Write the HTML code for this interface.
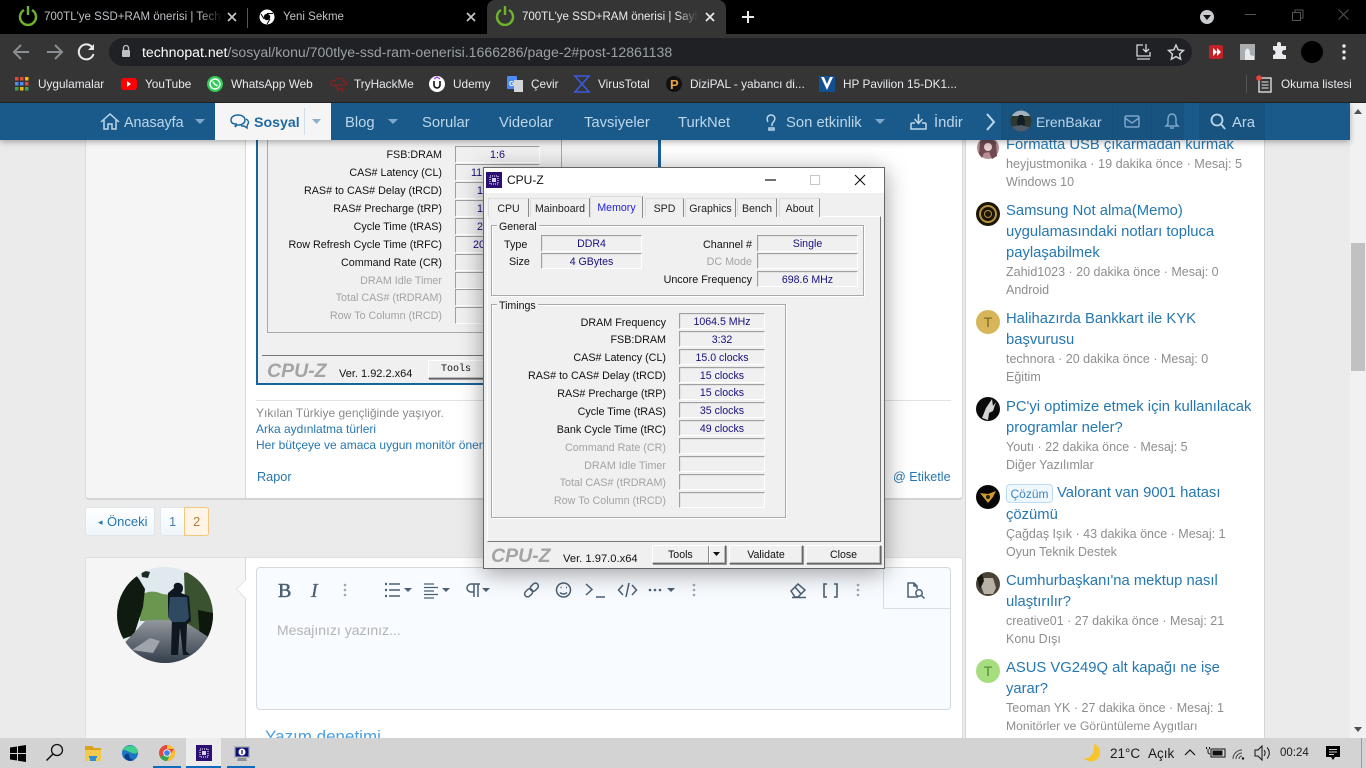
<!DOCTYPE html>
<html lang="tr"><head><meta charset="utf-8"><title>CPU-Z</title>
<style>
html,body{margin:0;padding:0;width:1366px;height:768px;overflow:hidden;background:#ebebeb;font-family:"Liberation Sans",sans-serif}
.l{position:absolute;left:0;top:0;width:1366px;height:768px;overflow:hidden}
.b{position:absolute;box-sizing:border-box}
.t{position:absolute;white-space:nowrap;line-height:20px;font-style:normal}
svg{position:absolute;left:0;top:0}
.n{font-size:14.8px;color:#bcd6ea;margin-top:1px}
.bm{font-size:11.8px;color:#e8eaed}
.h{font-size:14.8px;color:#2577b1;left:1006px;margin-top:1px}
.m{font-size:12.5px;color:#8e8e8e;left:1006px;margin-top:1px}
.cz{font-size:10.75px;color:#111;margin-top:1px}
.r{text-align:right}
.dis{color:#a3a3a3}
.f{position:absolute;box-sizing:border-box;background:#f0f0f0;border:1px solid;border-color:#a0a0a0 #fff #fff #a0a0a0;box-shadow:inset 1px 1px 0 #e3e3e3;font-size:10.6px;color:#17107e;text-align:center;line-height:16px;white-space:nowrap;overflow:hidden}
.tab{position:absolute;box-sizing:border-box;top:198px;height:19px;background:#f0f0f0;border:1px solid #dcdcdc;border-right:1px solid #8a8a8a;border-bottom:0;font-size:10.6px;color:#222;text-align:center;line-height:20px}
.btn{position:absolute;box-sizing:border-box;background:#f0f0f0;border:1px solid;border-color:#fff #666 #666 #fff;box-shadow:1px 1px 0 #999,inset -1px -1px 0 #bbb;font-size:10.6px;color:#111;text-align:center;line-height:18px}
.gb{position:absolute;box-sizing:border-box;border:1px solid #a9a9a9;box-shadow:inset 1px 1px 0 #fff,1px 1px 0 #fff}
.gl{position:absolute;background:#f0f0f0;font-size:10.6px;line-height:12px;padding:0 2px;color:#111;white-space:nowrap;margin-top:1px}
.logo{position:absolute;font:italic bold 19.5px/22px "Liberation Sans",sans-serif;color:#a4a4a4;white-space:nowrap}
</style></head><body>

<!-- PAGE -->
<div class="l" style="z-index:1">
 <div class="b" style="left:85px;top:100px;width:878px;height:400px;background:#fff;border:1px solid #dcdcdc;border-bottom:2px solid #d4d4d4;border-radius:0 0 4px 4px"></div>
 <div class="b" style="left:86px;top:100px;width:160px;height:398px;background:#f5f5f5;border-right:1px solid #d8d8d8;border-radius:0 0 0 4px"></div>

 <!-- Old CPU-Z image -->
 <div class="b" style="left:256px;top:100px;width:405px;height:285px;background:#f0f0f0;border:2px solid #17639b;border-width:0 3px 2px 2px"></div>
 <div class="b" style="left:267px;top:100px;width:295px;height:233px;border:1px solid #a9a9a9"></div>
 <div class="b" style="left:262px;top:355px;width:394px;height:1px;background:#777"></div>
 <div class="b" style="left:455px;top:146px;width:85px;height:17px;background:#f0f0f0;border:1px solid;border-color:#a0a0a0 #fff #fff #a0a0a0"></div>
 <div class="b" style="left:455px;top:164px;width:85px;height:17px;border:1px solid;border-color:#a0a0a0 #fff #fff #a0a0a0"></div>
 <div class="b" style="left:455px;top:182px;width:85px;height:17px;border:1px solid;border-color:#a0a0a0 #fff #fff #a0a0a0"></div>
 <div class="b" style="left:455px;top:200px;width:85px;height:17px;border:1px solid;border-color:#a0a0a0 #fff #fff #a0a0a0"></div>
 <div class="b" style="left:455px;top:218px;width:85px;height:17px;border:1px solid;border-color:#a0a0a0 #fff #fff #a0a0a0"></div>
 <div class="b" style="left:455px;top:236px;width:85px;height:17px;border:1px solid;border-color:#a0a0a0 #fff #fff #a0a0a0"></div>
 <div class="b" style="left:455px;top:254px;width:85px;height:17px;border:1px solid;border-color:#a0a0a0 #fff #fff #a0a0a0"></div>
 <div class="b" style="left:455px;top:272px;width:85px;height:17px;border:1px solid;border-color:#a0a0a0 #fff #fff #a0a0a0"></div>
 <div class="b" style="left:455px;top:289px;width:85px;height:17px;border:1px solid;border-color:#a0a0a0 #fff #fff #a0a0a0"></div>
 <div class="b" style="left:455px;top:307px;width:85px;height:17px;border:1px solid;border-color:#a0a0a0 #fff #fff #a0a0a0"></div>
 <i class="t cz r" style="left:262px;width:180px;top:144px">FSB:DRAM</i>
 <i class="t cz r" style="left:262px;width:180px;top:162px">CAS# Latency (CL)</i>
 <i class="t cz r" style="left:262px;width:180px;top:180px">RAS# to CAS# Delay (tRCD)</i>
 <i class="t cz r" style="left:262px;width:180px;top:198px">RAS# Precharge (tRP)</i>
 <i class="t cz r" style="left:262px;width:180px;top:216px">Cycle Time (tRAS)</i>
 <i class="t cz r" style="left:262px;width:180px;top:234px">Row Refresh Cycle Time (tRFC)</i>
 <i class="t cz r" style="left:262px;width:180px;top:252px">Command Rate (CR)</i>
 <i class="t cz r dis" style="left:262px;width:180px;top:270px">DRAM Idle Timer</i>
 <i class="t cz r dis" style="left:262px;width:180px;top:287px">Total CAS# (tRDRAM)</i>
 <i class="t cz r dis" style="left:262px;width:180px;top:305px">Row To Column (tRCD)</i>
 <i class="t cz" style="left:490px;top:144px;color:#17107e">1:6</i>
 <i class="t cz" style="left:471px;top:162px;color:#17107e">11</i>
 <i class="t cz" style="left:477px;top:180px;color:#17107e">1</i>
 <i class="t cz" style="left:477px;top:198px;color:#17107e">1</i>
 <i class="t cz" style="left:477px;top:216px;color:#17107e">2</i>
 <i class="t cz" style="left:473px;top:234px;color:#17107e">20</i>
 <div class="logo" style="left:267px;top:360px">CPU-Z</div>
 <i class="t cz" style="left:339px;top:363px;font-size:11px">Ver. 1.92.2.x64</i>
 <div class="btn" style="left:428px;top:360px;width:70px;height:19px;font-family:'Liberation Mono',monospace;font-size:10px;text-align:left;padding-left:12px">Tools</div>

 <div class="b" style="left:256px;top:400px;width:695px;height:1px;background:#e2e2e2"></div>
 <i class="t" style="left:256px;top:403px;font-size:12px;color:#8a8a8a">Yıkılan Türkiye gençliğinde yaşıyor.</i>
 <i class="t" style="left:256px;top:419px;font-size:12px;color:#2577b1">Arka aydınlatma türleri</i>
 <i class="t" style="left:256px;top:435px;font-size:12px;color:#2577b1">Her bütçeye ve amaca uygun monitör önerileri</i>
 <i class="t" style="left:257px;top:467px;font-size:12.7px;color:#2577b1">Rapor</i>
 <i class="t" style="left:893px;top:467px;font-size:12.6px;color:#2577b1">@ Etiketle</i>

 <!-- pagination -->
 <div class="b" style="left:85px;top:507px;width:70px;height:29px;background:linear-gradient(#fff,#eef6fc);border:1px solid #dfe5ea;border-radius:3px"></div>
 <i class="t" style="left:98px;top:512px;font-size:9px;color:#2577b1">◂</i>
 <i class="t" style="left:107px;top:512px;font-size:13px;color:#2577b1">Önceki</i>
 <div class="b" style="left:160px;top:507px;width:25px;height:29px;background:linear-gradient(#fff,#eef6fc);border:1px solid #dfe5ea;border-radius:3px 0 0 3px"></div>
 <i class="t" style="left:169px;top:512px;font-size:13px;color:#4a7fb5">1</i>
 <div class="b" style="left:184px;top:507px;width:25px;height:29px;background:#fff4e6;border:1px solid #f5c67e;border-radius:0 3px 3px 0"></div>
 <i class="t" style="left:193px;top:512px;font-size:13px;color:#b5803a">2</i>

 <!-- reply -->
 <div class="b" style="left:85px;top:557px;width:878px;height:200px;background:#fff;border:1px solid #dedede"></div>
 <div class="b" style="left:86px;top:558px;width:160px;height:200px;background:#f5f5f5;border-right:1px solid #d8d8d8"></div>
 <div class="b" style="left:237px;top:580px;width:18px;height:18px;background:#fff;transform:rotate(45deg) scale(.8);border-left:1px solid #dedede;border-bottom:1px solid #dedede"></div>
 <svg width="1366" height="768" style="z-index:1">
  <defs>
   <clipPath id="av"><circle cx="165" cy="615" r="48"/></clipPath>
   <linearGradient id="gr" x1="0" y1="0" x2="0" y2="1"><stop offset="0" stop-color="#92979c"/><stop offset="1" stop-color="#343e4c"/></linearGradient>
  </defs>
  <g clip-path="url(#av)">
   <rect x="117" y="567" width="96" height="96" fill="#dfe9ee"/>
   <path d="M140 596c8-6 16-5 22-2l20 2v25h-42z" fill="#6b9650"/>
   <path d="M117 567h12l10 12 6 10-2 18-9 28-17 6z" fill="#0f1a10"/>
   <path d="M141 570l9 2-2 6-6-1z" fill="#1c2a20"/>
   <path d="M184 573l8-2 21 8v58l-14 3-13-10z" fill="#3a5230"/>
   <path d="M198 610l15 3v25l-13 2z" fill="#0d170b"/>
   <path d="M146 620h36l31 20v23h-96v-12z" fill="url(#gr)"/>
   <path d="M132 650l18-12 10 3-7 12z" fill="#9ea4aa"/>
   <path d="M174 588c-2-7 9-7 9 0 0 3-1 4-2 5l8 3 2 25-4 3-1 27 4 4-7 0-3-27-2 27-7 0 1-36-4-3 0-23z" fill="#0f1720"/>
   <path d="M170 597h17l2 21-4 4h-13l-4-5z" fill="#2f4a60"/>
  </g>
 </svg>
 <div class="b" style="left:256px;top:567px;width:695px;height:143px;background:#f8fbff;border:1px solid #d5d8dc;border-radius:4px"></div>
 <div class="b" style="left:883px;top:567px;width:68px;height:42px;border:1px solid #dadde0;border-width:0 0 1px 1px"></div>
 <i class="t" style="left:277px;top:620px;font-size:14px;color:#b3b3b3">Mesajınızı yazınız...</i>
 <i class="t" style="left:265px;top:727px;font-size:17px;color:#4a9fe0">Yazım denetimi</i>

 <svg width="1366" height="768" fill="none" stroke="#4a5f73" stroke-width="1.500" style="z-index:2">
  <text x="278" y="597" font-family="Liberation Serif" font-size="20" fill="#4a5f73" stroke="#4a5f73" stroke-width=".5">B</text>
  <text x="311" y="597" font-family="Liberation Serif" font-size="20" font-style="italic" fill="#4a5f73" stroke="#4a5f73" stroke-width=".3">I</text>
  <g fill="#9aa8b4" stroke="none"><circle cx="345" cy="585" r="1.300"/><circle cx="345" cy="590" r="1.300"/><circle cx="345" cy="595" r="1.300"/><circle cx="694" cy="585" r="1.300"/><circle cx="694" cy="590" r="1.300"/><circle cx="694" cy="595" r="1.300"/><circle cx="858" cy="585" r="1.300"/><circle cx="858" cy="590" r="1.300"/><circle cx="858" cy="595" r="1.300"/></g>
  <path d="M389 584h11M389 590h11M389 596h11"/>
  <path d="M385 584h2M385 590h2M385 596h2" stroke-width="2.200"/>
  <path d="M424 584h10M424 587.500h14M424 591h10M424 594.500h14M424 598h10" stroke-width="1.200"/>
  <path d="M474 597v-13M478 597v-13M480 584h-9a4 4 0 0 0 0 8h3"/>
  <g fill="#4a5f73" stroke="none"><path d="M404 588h8l-4 4zM442 588h8l-4 4zM482 588h8l-4 4zM667 588h8l-4 4z"/><circle cx="650" cy="590" r="1.300"/><circle cx="655" cy="590" r="1.300"/><circle cx="660" cy="590" r="1.300"/></g>
  <g transform="rotate(-45 531.500 590)"><rect x="523" y="587" width="9" height="6" rx="3"/><rect x="531" y="587" width="9" height="6" rx="3"/></g>
  <circle cx="563.500" cy="590" r="7"/><path d="M560 592.500c2 2 5 2 7 0M560.500 587.500h1M566 587.500h1"/>
  <path d="M586 584l6 5.500-6 5.500M596 597h9"/>
  <path d="M623 585l-4.500 5 4.500 5M632 585l4.500 5-4.500 5M629 583l-3 14"/>
  <path d="M791 591l7-7 7 6-7 7h-3zM795 587l6 7M792 597.500h14"/>
  <path d="M827 584h-3v13h3M834 584h3v13h-3" stroke-width="1.600"/>
  <path d="M918 597h-10v-14h6l3 3v3M914 583v3h3M908 597h5"/><circle cx="919" cy="593" r="3.200"/><path d="M921.500 595.500l3 3"/>
 </svg>

 <!-- sidebar -->
 <div class="b" style="left:965px;top:100px;width:300px;height:640px;background:#fff;border:1px solid #d5d5d5;border-width:0 1px"></div>
 <i class="t h" style="top:134px">Formatta USB çıkarmadan kurmak</i>
 <i class="t m" style="top:153px;font-size:12.65px">heyjustmonika · 19 dakika önce · Mesaj: 5</i>
 <i class="t m" style="top:171px">Windows 10</i>
 <i class="t h" style="top:200px">Samsung Not alma(Memo)</i>
 <i class="t h" style="top:221px">uygulamasındaki notları topluca</i>
 <i class="t h" style="top:242px">paylaşabilmek</i>
 <i class="t m" style="top:261px">Zahid1023 · 20 dakika önce · Mesaj: 0</i>
 <i class="t m" style="top:279px">Android</i>
 <i class="t h" style="top:308px">Halihazırda Bankkart ile KYK</i>
 <i class="t h" style="top:329px">başvurusu</i>
 <i class="t m" style="top:348px">technora · 20 dakika önce · Mesaj: 0</i>
 <i class="t m" style="top:366px">Eğitim</i>
 <i class="t h" style="top:396px">PC'yi optimize etmek için kullanılacak</i>
 <i class="t h" style="top:417px">programlar neler?</i>
 <i class="t m" style="top:436px">Youtı · 22 dakika önce · Mesaj: 5</i>
 <i class="t m" style="top:454px">Diğer Yazılımlar</i>
 <div class="b" style="left:1006px;top:484px;width:47px;height:19px;background:#f0f8ff;border:1px solid #bcdcf5;border-radius:4px;font-size:12px;color:#3f86bd;text-align:center;line-height:18px">Çözüm</div>
 <i class="t h" style="left:1057px;top:482px">Valorant van 9001 hatası</i>
 <i class="t h" style="top:504px">çözümü</i>
 <i class="t m" style="top:523px">Çağdaş Işık · 43 dakika önce · Mesaj: 1</i>
 <i class="t m" style="top:541px">Oyun Teknik Destek</i>
 <i class="t h" style="top:570px">Cumhurbaşkanı'na mektup nasıl</i>
 <i class="t h" style="top:591px">ulaştırılır?</i>
 <i class="t m" style="top:610px">creative01 · 27 dakika önce · Mesaj: 21</i>
 <i class="t m" style="top:628px">Konu Dışı</i>
 <i class="t h" style="top:657px">ASUS VG249Q alt kapağı ne işe</i>
 <i class="t h" style="top:678px">yarar?</i>
 <i class="t m" style="top:697px">Teoman YK · 27 dakika önce · Mesaj: 1</i>
 <i class="t m" style="top:715px;font-size:12.2px">Monitörler ve Görüntüleme Aygıtları</i>
 <svg width="1366" height="768" style="z-index:2">
  <circle cx="988" cy="148" r="11" fill="#b58f94"/><path d="M980 141l8-4 8 5 1 14-5 3-3-7-5 1-2 5-3-4z" fill="#6e4a52"/><circle cx="988" cy="147" r="4" fill="#e8cfcb"/>
  <circle cx="988" cy="214" r="12" fill="#1c1608"/><circle cx="988" cy="214" r="8" fill="none" stroke="#b5923f" stroke-width="2"/><circle cx="988" cy="214" r="3.500" fill="none" stroke="#b5923f"/>
  <circle cx="988" cy="322" r="12" fill="#d6b658"/><text x="988" y="327" text-anchor="middle" font-family="Liberation Sans" font-size="14" fill="#7c6425">T</text>
  <circle cx="988" cy="409" r="12" fill="#0b0b0b"/><path d="M982 418l4-10 6-9 1 7 3-4-3 9-4 2-1 7z" fill="#d5d5d5"/>
  <circle cx="988" cy="497" r="12" fill="#070707"/><path d="M980 493l8 1 8-3-3 6-5 6-4-5z" fill="#d19a2a"/><circle cx="988" cy="497" r="2" fill="#222"/>
  <circle cx="988" cy="584" r="12" fill="#4b4238"/><path d="M984 578h9l3 10-3 6h-9l-3-8z" fill="#b8b1a6"/><path d="M977 578l5-4 2 7-4 8z" fill="#1d1712"/>
  <circle cx="988" cy="671" r="12" fill="#a6dd7f"/><text x="988" y="676" text-anchor="middle" font-family="Liberation Sans" font-size="14" fill="#4f8a2e">T</text>
 </svg>

 <!-- scrollbar -->
 <div class="b" style="left:1350px;top:103px;width:16px;height:635px;background:#f1f1f1"></div>
 <div class="b" style="left:1351px;top:243px;width:14px;height:128px;background:#c1c1c1"></div>
 <div class="b" style="left:1354px;top:109px;border:4px solid transparent;border-top:0;border-bottom:5px solid #505050"></div>
 <div class="b" style="left:1354px;top:727px;border:4px solid transparent;border-bottom:0;border-top:5px solid #505050"></div>
</div>

<!-- NAV -->
<div class="l" style="z-index:3;height:150px">
 <div class="b" style="left:0;top:103px;width:1350px;height:37px;background:#1a5a8a;box-shadow:0 2px 6px rgba(0,0,0,.3)"></div>
 <div class="b" style="left:215px;top:103px;width:116px;height:37px;background:#f5f5f5"></div>
 <div class="b" style="left:304px;top:108px;width:1px;height:27px;background:#cfdde8"></div>
 <div class="b" style="left:1001px;top:103px;width:183px;height:37px;background:#185380"></div>
 <div class="b" style="left:1112px;top:103px;width:1px;height:37px;background:#164c75"></div>
 <div class="b" style="left:1151px;top:103px;width:1px;height:37px;background:#164c75"></div>
 <div class="b" style="left:1199px;top:103px;width:66px;height:37px;background:#185380"></div>
 <i class="t n" style="left:124px;top:112px;font-size:14.3px">Anasayfa</i>
 <i class="t" style="left:254px;top:113px;font-size:14.2px;font-weight:bold;color:#1d6aa3">Sosyal</i>
 <i class="t n" style="left:345px;top:112px">Blog</i>
 <i class="t n" style="left:422px;top:112px">Sorular</i>
 <i class="t n" style="left:499px;top:112px">Videolar</i>
 <i class="t n" style="left:584px;top:112px">Tavsiyeler</i>
 <i class="t n" style="left:678px;top:112px">TurkNet</i>
 <i class="t n" style="left:786px;top:112px">Son etkinlik</i>
 <i class="t n" style="left:934px;top:112px">İndir</i>
 <i class="t n" style="left:1036px;top:111px;font-size:13.9px">ErenBakar</i>
 <i class="t n" style="left:1232px;top:112px">Ara</i>
 <svg width="1366" height="150" fill="none" stroke="#bcd6ea" stroke-width="1.500">
  <path d="M101 122l9-8 9 8M104 120v9h4v-5h4v5h4v-9"/>
  <g stroke="#1d6aa3"><path d="M236 124c-4 0-5-2-5-4 0-3 3-5 7-5s7 2 7 5-3 5-6 5h-2l-2 2z"/><path d="M246 119c2 1 3 3 2 5-1 1-1 2-1 4l-3-2h-3"/></g>
  <path d="M768 122c-2-4 0-7 3-7s5 3 3 6l-2 3v2M769 128h5v2h-5z"/>
  <path d="M911 123v6h15v-6M918.500 114v9M914.500 119l4 4.500 4-4.500M911 123h4M922 123h4"/>
  <path d="M987 114l7 8-7 8" stroke-width="2"/>
  <g stroke="#7ba6c9"><rect x="1125" y="116" width="14" height="11" rx="1.500"/><path d="M1125 118l7 5 7-5"/>
  <path d="M1172 114c-3 0-4 3-4 5v5l-2 2h12l-2-2v-5c0-2-1-5-4-5zM1170 128h4"/></g>
  <circle cx="1217" cy="120" r="5.500" stroke-width="1.800"/><path d="M1221 124l4 5" stroke-width="1.800"/>
  <g fill="#7ea9cc" stroke="none"><path d="M195 119h10l-5 5zM388 119h10l-5 5zM875 119h10l-5 5z"/></g>
  <path d="M312 119h9l-4.500 5z" fill="#8ab0cc" stroke="none"/>
  <defs><clipPath id="uav"><circle cx="1021" cy="121" r="10.500"/></clipPath></defs>
  <g clip-path="url(#uav)" stroke="none"><rect x="1010" y="110" width="22" height="22" fill="#2f392f"/><path d="M1010 110h22v6h-22z" fill="#9fb2bd"/><path d="M1019 115h4l2 6-1 11h-6l-1-11z" fill="#121c25"/><path d="M1010 127l11-2 11 3v4h-22z" fill="#525d68"/></g>
 </svg>
</div>

<!-- CPU-Z WINDOW -->
<div class="l" style="z-index:4">
 <div class="b" style="left:483px;top:167px;width:402px;height:402px;background:#f0f0f0;border:1px solid #666;box-shadow:0 4px 22px rgba(0,0,0,.38)"></div>
 <div class="b" style="left:484px;top:168px;width:400px;height:25px;background:#fff"></div>
 <i class="t" style="left:507px;top:170px;font-size:12px;color:#111">CPU-Z</i>
 <svg width="1366" height="768" style="z-index:2">
  <rect x="486" y="172" width="16" height="16" fill="#2b0f73"/>
  <rect x="490" y="176" width="8" height="8" fill="none" stroke="#fff" stroke-dasharray="1 1"/><rect x="492" y="178" width="4" height="4" fill="#d8d2ec"/>
  <path d="M765 180h11" stroke="#111" stroke-width="1.200"/>
  <rect x="810.500" y="175.500" width="9" height="9" fill="none" stroke="#c8c8c8"/>
  <path d="M855 175l10 10M865 175l-10 10" stroke="#111" stroke-width="1.100"/>
  <path d="M713 552h7l-3.500 4z" fill="#111"/>
 </svg>

 <div class="b" style="left:487px;top:216px;width:394px;height:326px;border:1px solid;border-color:#fff #777 #777 #fff;background:#f0f0f0"></div>
 <div class="tab" style="left:488px;width:41px">CPU</div>
 <div class="tab" style="left:530px;width:60px">Mainboard</div>
 <div class="tab" style="left:645px;width:39px">SPD</div>
 <div class="tab" style="left:685px;width:51px">Graphics</div>
 <div class="tab" style="left:737px;width:40px">Bench</div>
 <div class="tab" style="left:779px;width:41px">About</div>
 <div class="tab" style="left:590px;top:196px;width:53px;height:22px;color:#2222dd;border-bottom:0;line-height:23px;z-index:2">Memory</div>

 <div class="gb" style="left:491px;top:225px;width:373px;height:71px"></div>
 <div class="gl" style="left:497px;top:220px">General</div>
 <i class="t cz" style="left:504px;top:234px">Type</i>
 <i class="t cz" style="left:509px;top:251px">Size</i>
 <div class="f" style="left:541px;top:235px;width:101px;height:17px">DDR4</div>
 <div class="f" style="left:541px;top:253px;width:101px;height:16px">4 GBytes</div>
 <i class="t cz r" style="left:640px;width:112px;top:234px">Channel #</i>
 <i class="t cz r dis" style="left:640px;width:112px;top:251px">DC Mode</i>
 <i class="t cz r" style="left:640px;width:112px;top:269px">Uncore Frequency</i>
 <div class="f" style="left:757px;top:235px;width:101px;height:17px">Single</div>
 <div class="f" style="left:757px;top:253px;width:101px;height:16px"></div>
 <div class="f" style="left:757px;top:271px;width:101px;height:16px">698.6 MHz</div>

 <div class="gb" style="left:491px;top:304px;width:295px;height:214px"></div>
 <div class="gl" style="left:497px;top:299px">Timings</div>
 <i class="t cz r" style="left:490px;width:176px;top:312px">DRAM Frequency</i>
 <i class="t cz r" style="left:490px;width:176px;top:329px">FSB:DRAM</i>
 <i class="t cz r" style="left:490px;width:176px;top:347px">CAS# Latency (CL)</i>
 <i class="t cz r" style="left:490px;width:176px;top:365px">RAS# to CAS# Delay (tRCD)</i>
 <i class="t cz r" style="left:490px;width:176px;top:383px">RAS# Precharge (tRP)</i>
 <i class="t cz r" style="left:490px;width:176px;top:401px">Cycle Time (tRAS)</i>
 <i class="t cz r" style="left:490px;width:176px;top:419px">Bank Cycle Time (tRC)</i>
 <i class="t cz r dis" style="left:490px;width:176px;top:437px">Command Rate (CR)</i>
 <i class="t cz r dis" style="left:490px;width:176px;top:455px">DRAM Idle Timer</i>
 <i class="t cz r dis" style="left:490px;width:176px;top:472px">Total CAS# (tRDRAM)</i>
 <i class="t cz r dis" style="left:490px;width:176px;top:490px">Row To Column (tRCD)</i>
 <div class="f" style="left:679px;top:313px;width:86px;height:16px">1064.5 MHz</div>
 <div class="f" style="left:679px;top:331px;width:86px;height:16px">3:32</div>
 <div class="f" style="left:679px;top:349px;width:86px;height:16px">15.0 clocks</div>
 <div class="f" style="left:679px;top:367px;width:86px;height:16px">15 clocks</div>
 <div class="f" style="left:679px;top:384px;width:86px;height:16px">15 clocks</div>
 <div class="f" style="left:679px;top:402px;width:86px;height:16px">35 clocks</div>
 <div class="f" style="left:679px;top:420px;width:86px;height:16px">49 clocks</div>
 <div class="f" style="left:679px;top:438px;width:86px;height:16px"></div>
 <div class="f" style="left:679px;top:456px;width:86px;height:16px"></div>
 <div class="f" style="left:679px;top:474px;width:86px;height:16px"></div>
 <div class="f" style="left:679px;top:492px;width:86px;height:16px"></div>

 <div class="logo" style="left:491px;top:545px">CPU-Z</div>
 <i class="t cz" style="left:563px;top:548px;font-size:11.2px">Ver. 1.97.0.x64</i>
 <div class="btn" style="left:652px;top:545px;width:74px;height:19px;text-align:left;padding-left:15px">Tools</div>
 <div class="b" style="left:708px;top:546px;width:2px;height:17px;background:#888;border-right:1px solid #fff"></div>
 <div class="btn" style="left:729px;top:545px;width:74px;height:19px">Validate</div>
 <div class="btn" style="left:806px;top:545px;width:75px;height:19px">Close</div>
</div>

<!-- BROWSER CHROME + TASKBAR -->
<div class="l" style="z-index:5">
 <div class="b" style="left:0;top:0;width:1366px;height:34px;background:#000"></div>
 <div class="b" style="left:487px;top:0;width:239px;height:34px;background:#353535;border-radius:8px 8px 0 0"></div>
 <div class="b" style="left:0;top:34px;width:1366px;height:68px;background:#353535"></div>
 <div class="b" style="left:0;top:102px;width:1366px;height:1px;background:#222"></div>
 <div class="b" style="left:109px;top:38px;width:1083px;height:28px;background:#202124;border-radius:14px"></div>
 <div class="b" style="left:247px;top:8px;width:1px;height:20px;background:#555"></div>

 <div class="b" style="left:44px;top:7px;width:178px;height:20px;overflow:hidden;-webkit-mask-image:linear-gradient(90deg,#000 88%,transparent)"><i class="t" style="left:0;top:0;font-size:11.5px;color:#bdc1c6">700TL'ye SSD+RAM önerisi | Technopat Sosyal</i></div>
 <i class="t" style="left:283px;top:7px;font-size:11.5px;color:#bdc1c6">Yeni Sekme</i>
 <div class="b" style="left:522px;top:7px;width:176px;height:20px;overflow:hidden;-webkit-mask-image:linear-gradient(90deg,#000 88%,transparent)"><i class="t" style="left:0;top:0;font-size:11.5px;color:#e8eaed">700TL'ye SSD+RAM önerisi | Sayfa 2</i></div>

 <i class="t" style="left:142px;top:42px;font-size:14.1px;color:#fff">technopat.net<span style="color:#9aa0a6">/sosyal/konu/700tlye-ssd-ram-oenerisi.1666286/page-2#post-12861138</span></i>

 <i class="t bm" style="left:38px;top:74px">Uygulamalar</i>
 <i class="t bm" style="left:145px;top:74px">YouTube</i>
 <i class="t bm" style="left:231px;top:74px">WhatsApp Web</i>
 <i class="t bm" style="left:354px;top:74px">TryHackMe</i>
 <i class="t bm" style="left:453px;top:74px">Udemy</i>
 <i class="t bm" style="left:531px;top:74px">Çevir</i>
 <i class="t bm" style="left:598px;top:74px">VirusTotal</i>
 <i class="t bm" style="left:690px;top:74px">DiziPAL - yabancı di...</i>
 <i class="t bm" style="left:843px;top:74px">HP Pavilion 15-DK1...</i>
 <i class="t bm" style="left:1281px;top:74px">Okuma listesi</i>

 <!-- taskbar -->
 <div class="b" style="left:0;top:738px;width:1366px;height:30px;background:#d3d3d3"></div>
 <div class="b" style="left:186px;top:738px;width:35px;height:30px;background:#ececec"></div>
 <div class="b" style="left:153px;top:766px;width:28px;height:2px;background:#0f6cbd"></div>
 <div class="b" style="left:186px;top:766px;width:35px;height:2px;background:#0f6cbd"></div>
 <div class="b" style="left:227px;top:766px;width:28px;height:2px;background:#0f6cbd"></div>
 <div class="b" style="left:1361px;top:738px;width:1px;height:30px;background:#9b9b9b"></div>
 <i class="t" style="left:1110px;top:744px;font-size:13.5px;color:#1a1a1a">21°C</i>
 <i class="t" style="left:1148px;top:744px;font-size:13.5px;color:#1a1a1a">Açık</i>
 <i class="t" style="left:1280px;top:743px;font-size:11.5px;color:#1a1a1a">00:24</i>

 <svg width="1366" height="768" fill="none">
  <!-- tab icons -->
  <g stroke="#6fb52c" stroke-width="2.400"><path d="M24 10a8 8 0 1 0 8 0"/><path d="M28 6v9"/><path d="M501 10a8 8 0 1 0 8 0"/><path d="M505 6v9"/></g>
  <circle cx="267" cy="17" r="7.500" fill="#fff"/><circle cx="267" cy="17" r="3.200" fill="#000"/><path d="M267 13.500h6M264 19l-3-5M270 19l-3 5" stroke="#000"/>
  <g stroke="#c4c7cb" stroke-width="1.700"><path d="M228 13l8 8M236 13l-8 8M467 13l8 8M475 13l-8 8"/></g>
  <path d="M706 13l8 8M714 13l-8 8" stroke="#e8eaed" stroke-width="1.700"/>
  <path d="M742 17h12M748 11v12" stroke="#e8eaed" stroke-width="2"/>
  <circle cx="1207" cy="17" r="7" fill="#c9cbce"/><path d="M1203 15h8l-4 5z" fill="#111"/>
  <path d="M1245 14.500h11" stroke="#555"/>
  <path d="M1292.500 12.500h8v8h-8zM1295 12.500v-2.500h8v8h-2.500" stroke="#555"/>
  <path d="M1338.500 9.500l10 10M1348.500 9.500l-10 10" stroke="#555"/>
  <!-- toolbar -->
  <path d="M29 52H15M21 45l-7 7 7 7" stroke="#8a8d91" stroke-width="2"/>
  <path d="M47 52h14M55 45l7 7-7 7" stroke="#8a8d91" stroke-width="2"/>
  <path d="M92 47a7.500 7.500 0 1 0 1.500 7" stroke="#e8eaed" stroke-width="2"/><path d="M94 44v6h-6z" fill="#e8eaed"/>
  <rect x="122" y="50" width="8" height="7" rx="1" fill="#bdc1c6"/><path d="M123.500 50v-2a2.500 2.500 0 0 1 5 0v2" stroke="#bdc1c6" stroke-width="1.300"/>
  <path d="M1143 45h-6v11h13v-4M1137 59h13M1146 44v8M1143 49l3 3 3-3" stroke="#d5d7da" stroke-width="1.300"/>
  <path d="M1176 45l2.200 4.800 5.300.6-3.900 3.600 1 5.200-4.600-2.600-4.600 2.600 1-5.200-3.900-3.600 5.300-.6z" stroke="#d5d7da" stroke-width="1.400"/>
  <rect x="1209" y="45" width="14" height="14" rx="2" fill="#c22226"/><path d="M1213 48l4 4-4 4zM1217 48l4 4-4 4z" fill="#fff"/>
  <rect x="1240" y="44" width="15" height="16" fill="#a9adb0"/><path d="M1245 60v-7c0-6 5-6 5 0v2l4 1v4z" fill="#e8eaed"/>
  <path d="M1273 48h4v-2a2 2 0 0 1 4 0v2h5v4h-1.500a2.500 2.500 0 0 0 0 5H1286v4h-13v-4a2.500 2.500 0 0 0 0-5z" fill="#e8eaed" transform="translate(0,-2)"/>
  <circle cx="1312" cy="52" r="11" fill="#000"/>
  <g fill="#e8eaed"><circle cx="1344" cy="46" r="1.700"/><circle cx="1344" cy="52" r="1.700"/><circle cx="1344" cy="58" r="1.700"/></g>
  <!-- bookmarks -->
  <g><rect x="15" y="77" width="3.500" height="3.500" fill="#e04a3f"/><rect x="20" y="77" width="3.500" height="3.500" fill="#e04a3f"/><rect x="25" y="77" width="3.500" height="3.500" fill="#f2b50f"/><rect x="15" y="82" width="3.500" height="3.500" fill="#4c8bf5"/><rect x="20" y="82" width="3.500" height="3.500" fill="#4c8bf5"/><rect x="25" y="82" width="3.500" height="3.500" fill="#e04a3f"/><rect x="15" y="87" width="3.500" height="3.500" fill="#34a853"/><rect x="20" y="87" width="3.500" height="3.500" fill="#f2b50f"/><rect x="25" y="87" width="3.500" height="3.500" fill="#34a853"/></g>
  <rect x="121" y="78" width="16" height="12" rx="3" fill="#f00"/><path d="M127 81l4 3-4 3z" fill="#fff"/>
  <circle cx="215" cy="84" r="8" fill="#2fcb56"/><circle cx="215" cy="84" r="5" fill="none" stroke="#fff" stroke-width="1.400"/><path d="M213 81.500l1 2 2.500 2 1-.5" stroke="#fff" stroke-width="1.500"/>
  <path d="M331 84c0-3 3-4 4-3 1-4 7-4 8 0 3 0 4 2 3 4h-15zM335 85l3 5 4-2 1 4" stroke="#9b1c1c" stroke-width="1.100"/>
  <circle cx="437" cy="84" r="8" fill="#fff"/><path d="M434 81v4a3 3 0 0 0 6 0v-4" stroke="#111" stroke-width="1.600"/><path d="M434 79l3-2 3 2" stroke="#a435f0" stroke-width="1.200"/>
  <rect x="507" y="76" width="10" height="13" rx="1" fill="#4c8bf5"/><rect x="514" y="80" width="9" height="12" fill="#d3d5d8"/><text x="509" y="86" font-family="Liberation Sans" font-size="7" font-weight="bold" fill="#fff">G</text>
  <path d="M575 76h14l-7 8 7 8h-14l7-8z" stroke="#3b5be0" stroke-width="1.500"/>
  <circle cx="674" cy="84" r="8" fill="#111"/><text x="670" y="89" font-family="Liberation Sans" font-size="13" font-weight="bold" fill="#e8a33d">P</text>
  <rect x="819" y="76" width="16" height="16" fill="#12508f"/><path d="M821 77l6 13 6-13h-3l-3 7-3-7z" fill="#fff"/>
  <path d="M1246.500 75v18" stroke="#555"/>
  <rect x="1259" y="78" width="12" height="14" stroke="#e8eaed" stroke-width="1.300"/><path d="M1261.500 82h7M1261.500 85h7M1261.500 88h7" stroke="#e8eaed"/><circle cx="1259" cy="78" r="2.800" fill="#ea4335"/>
  <!-- taskbar icons -->
  <path d="M10 747.500l7-1v6.500h-7zM18 746.300l8-1.300v8h-8zM10 754h7v6.500l-7-1zM18 754h8v8l-8-1.300z" fill="#000"/>
  <circle cx="57" cy="750" r="5.500" stroke="#111" stroke-width="1.300"/><path d="M53 754l-6.500 6.500" stroke="#111" stroke-width="1.500"/>
  <path d="M85 746h7l2 2h7v3H85z" fill="#d9a21b"/><path d="M85 750h16v11H85z" fill="#f4c94f"/><path d="M90 761v-5h6v5z" fill="#2d8fd5"/><path d="M89 756h8v2h-8z" fill="#2d8fd5"/>
  <circle cx="130" cy="753" r="8" fill="#1a76c4"/><path d="M123 750c2-6 13-6 15 1 0 3-4 3-6 2-3-1-6-3-9-3z" fill="#3fcf8e"/><path d="M124 756c1 4 6 6 10 4-3-1-5-2-5-5 0-2-3-2-5 1z" fill="#0c3f87"/>
  <circle cx="167" cy="753" r="8" fill="#e9483a"/><path d="M167 753l-7 4a8 8 0 0 0 7 4l3.500-7z" fill="#32a852"/><path d="M167 745a8 8 0 0 1 7 4h-7zM175 753a8 8 0 0 1-8 8l3.500-7 3.500-5z" fill="#fbc02d"/><circle cx="167" cy="753" r="3.800" fill="#fff"/><circle cx="167" cy="753" r="2.900" fill="#3f83e8"/>
  <rect x="196" y="745" width="16" height="16" fill="#2b0f73"/><rect x="200" y="749" width="8" height="8" stroke="#fff" stroke-dasharray="1 1"/><rect x="202" y="751" width="4" height="4" fill="#d8d2ec"/>
  <rect x="234" y="746" width="16" height="12" fill="#b4b7ba"/><rect x="235.500" y="747.500" width="13" height="9" fill="#10107c"/><circle cx="242" cy="752" r="3.500" fill="#fff"/><path d="M242 750v4" stroke="#10107c" stroke-width="1.300"/><path d="M238 758h8l1 3h-10z" fill="#8e9194"/>
  <path d="M1094 744a9 9 0 1 1-10 14c5 1 11-3 10-14z" fill="#f6c52c"/>
  <path d="M1185 755l5-5 5 5" stroke="#111" stroke-width="1.200"/>
  <rect x="1211" y="749" width="14" height="8" stroke="#111"/><rect x="1212.500" y="750.500" width="10" height="5" fill="#111"/><path d="M1208 749v3a2 2 0 0 0 2 2M1206.500 749v-2M1209.500 749v-2" stroke="#111"/>
  <path d="M1233 759a9 9 0 0 1 9-9M1236 759a6 6 0 0 1 6-6M1239 759a3 3 0 0 1 3-3" stroke="#444"/><circle cx="1243" cy="758.500" r="1.200" fill="#111"/>
  <path d="M1255 750h3l4-4v14l-4-4h-3zM1264 750c1.500 2 1.500 4 0 6M1267 747.500c3 3 3 8 0 11" stroke="#111"/>
  <path d="M1326 746h14v11h-5l-2 3-2-3h-5z" fill="#000"/><path d="M1329 749.500h8M1329 752h8M1329 754.500h5" stroke="#d3d3d3"/>
 </svg>
</div>
</body></html>
